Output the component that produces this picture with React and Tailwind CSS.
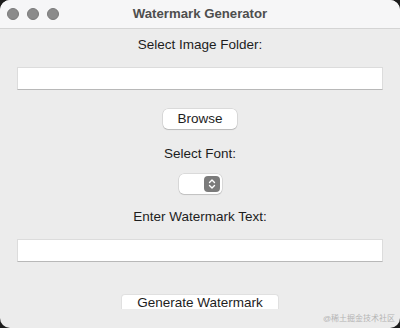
export default function App() {
  return (
    <div className="w-[400px] h-[328px] bg-[#1c1c1c] relative" style={{ fontFamily: '"Liberation Sans", "Noto Sans CJK SC", sans-serif' }}>
      <div className="w-full h-full rounded-[10px] overflow-hidden bg-[#ececec] flex flex-col">
        {/* title bar */}
        <div className="h-[29px] shrink-0 bg-[#f6f6f7] border-b border-[#d4d4d4] relative flex items-center justify-center">
          <div className="absolute left-[7px] top-[8px] flex gap-[8px]">
            <span className="w-[12px] h-[12px] rounded-full bg-[#8b8b8b] border border-[#7a7a7a]"></span>
            <span className="w-[12px] h-[12px] rounded-full bg-[#8b8b8b] border border-[#7a7a7a]"></span>
            <span className="w-[12px] h-[12px] rounded-full bg-[#8b8b8b] border border-[#7a7a7a]"></span>
          </div>
          <span className="text-[13.2px] font-bold text-[#4e4e4e]">Watermark Generator</span>
        </div>

        <div className="flex flex-col items-center pt-[8px] text-[13.5px] text-[#1d1d1d]">
          <p className="leading-[16px]">Select Image Folder:</p>
          <div className="mt-[14px] w-[366px] h-[23px] bg-white border border-[#dcdcdc] border-b-[#b8b8b8]"></div>
          <button className="mt-[19px] w-[74px] h-[20px] bg-white rounded-[5px] shadow-[0_0_0_0.5px_rgba(0,0,0,0.15),0_1px_1px_rgba(0,0,0,0.15)] leading-[20px]">
            Browse
          </button>
          <p className="mt-[17px] leading-[16px]">Select Font:</p>
          <div className="mt-[12px] w-[43px] h-[20px] bg-white rounded-[5px] shadow-[0_0_0_0.5px_rgba(0,0,0,0.15),0_1px_1px_rgba(0,0,0,0.12)] flex items-center justify-end pr-[2px]">
            <div className="w-[16px] h-[16px] rounded-[4px] bg-[#7b7b7b] flex items-center justify-center">
              <svg width="8" height="12" viewBox="0 0 8 12" fill="none" stroke="white" strokeWidth="1.4" strokeLinecap="round" strokeLinejoin="round">
                <path d="M1.5 4.5 L4 2 L6.5 4.5" />
                <path d="M1.5 7.5 L4 10 L6.5 7.5" />
              </svg>
            </div>
          </div>
          <p className="mt-[15px] leading-[16px]">Enter Watermark Text:</p>
          <div className="mt-[14px] w-[366px] h-[23px] bg-white border border-[#dcdcdc] border-b-[#b8b8b8]"></div>
          <div className="mt-[32px] w-[158px] h-[15px] bg-white rounded-t-[4px] text-center leading-[16px] border-t border-x border-[#e0e0e0]">
            Generate Watermark
          </div>
        </div>
      </div>
      <span className="absolute right-[5px] bottom-[4px] text-[8px] text-[#b4b4b4] leading-[10px]">@稀土掘金技术社区</span>
    </div>
  );
}
